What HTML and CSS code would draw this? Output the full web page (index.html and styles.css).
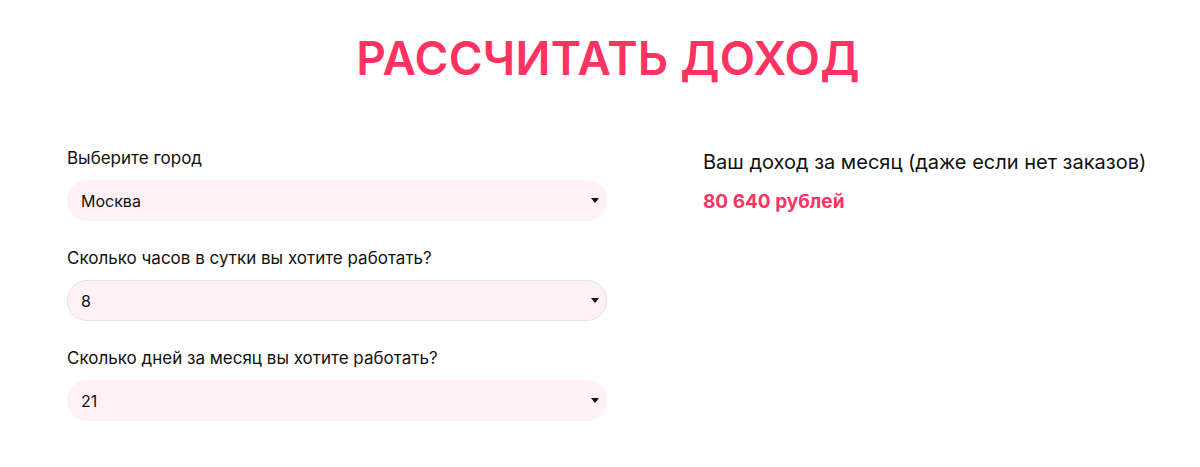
FILE: index.html
```html
<!DOCTYPE html>
<html lang="ru">
<head>
<meta charset="utf-8">
<link rel="stylesheet" href="styles.css">
</head>
<body>
<section class="calc">
  <h1 class="title">РАССЧИТАТЬ ДОХОД</h1>
  <div class="grid">
    <div class="form">
      <div class="field">
        <label class="label">Выберите город</label>
        <div class="select">
          <span class="value">Москва</span>
          <span class="arrow"></span>
        </div>
      </div>
      <div class="field">
        <label class="label">Сколько часов в сутки вы хотите работать?</label>
        <div class="select focused">
          <span class="value">8</span>
          <span class="arrow"></span>
        </div>
      </div>
      <div class="field">
        <label class="label">Сколько дней за месяц вы хотите работать?</label>
        <div class="select">
          <span class="value">21</span>
          <span class="arrow"></span>
        </div>
      </div>
    </div>
    <div class="result">
      <p class="result-label">Ваш доход за месяц (даже если нет заказов)</p>
      <p class="result-value">80 640 рублей</p>
    </div>
  </div>
</section>
</body>
</html>
```
FILE: styles.css
```css
* { box-sizing: border-box; }
html, body { margin: 0; background: #fff; }
body { font-family: Inter, "Noto Sans", sans-serif; color: #111; }
.calc { padding: 28px 0 0 67px; }
.title {
  margin: 0 0 0 -51px;
  text-align: center;
  font-size: 46px;
  font-weight: 600;
  line-height: 60px;
  color: #fe3362;
  letter-spacing: 0.3px;
}
.grid {
  display: grid;
  grid-template-columns: 540px 1fr;
  column-gap: 96px;
  margin-top: 58px;
}
.form { display: flex; flex-direction: column; gap: 25px; }
.field { display: flex; flex-direction: column; gap: 10px; }
.label { font-size: 17px; line-height: 24px; color: #111; }
.select {
  height: 41px;
  border-radius: 20px;
  background: #fff1f5;
  display: flex;
  align-items: center;
  justify-content: space-between;
  padding: 0 7px 0 13px;
  border: 1px solid transparent;
}
.select.focused { border-color: #eedfe3; }
.value { font-size: 16px; color: #111; }
.arrow {
  width: 0; height: 0;
  border-left: 4.5px solid transparent;
  border-right: 4.5px solid transparent;
  border-top: 5px solid #111;
}
.result { padding-top: 3px; }
.result-label { margin: 0; font-size: 20px; line-height: 26px; color: #111; }
.result-value { margin: 15px 0 0; font-size: 19px; line-height: 24px; font-weight: 700; color: #fe3362; }
```
